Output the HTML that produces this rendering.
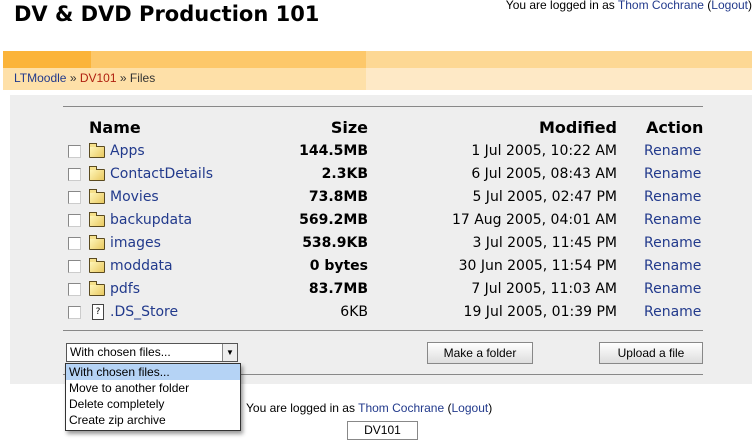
<!DOCTYPE html>
<html><head><style>
body{margin:0;width:755px;height:442px;background:#fff;font-family:"DejaVu Sans","Liberation Sans",sans-serif;position:relative;overflow:hidden;color:#000}
.a{position:absolute;white-space:nowrap}
a,.l{color:#223a8c;text-decoration:none}
.row{position:absolute;left:0;height:20px;font-size:14px}
.cb{position:absolute;left:68px;top:2px;width:11px;height:11px;border:1px solid #888;border-right-color:#ccc;border-bottom-color:#ccc;background:#fff}
.fd{position:absolute;left:89px;top:3px;width:14px;height:10px;background:linear-gradient(135deg,#fff6b8,#e8c860);border:1px solid #5a4a20;border-radius:1px}
.fd:before{content:"";position:absolute;left:-1px;top:-4px;width:6px;height:3px;border:1px solid #5a4a20;border-bottom:none;background:#f5e08a}
.nm{position:absolute;left:110px;top:0;color:#223a8c}
.sz{position:absolute;right:387px;top:0;font-weight:bold}
.md{position:absolute;right:138px;top:0}
.rn{position:absolute;left:644px;top:0;color:#223a8c}
.btn{position:absolute;background:linear-gradient(#fff,#ddd);border:1px solid #888;font-size:12px;text-align:center;font-family:"Liberation Sans",sans-serif}
</style></head><body>
<div class="a" style="left:14px;top:2px;font-size:21px;font-weight:bold">DV &amp; DVD Production 101</div>
<div class="a" style="right:3px;top:-2px;font-size:12px;font-family:'Liberation Sans',sans-serif">You are logged in as <span class="l">Thom Cochrane</span> (<span class="l">Logout</span>)</div>
<div class="a" style="left:3px;top:51px;width:749px;height:17px;background:#fdc86a"></div>
<div class="a" style="left:3px;top:51px;width:88px;height:17px;background:#fbb43a"></div>
<div class="a" style="left:366px;top:51px;width:386px;height:17px;background:#fdd894"></div>
<div class="a" style="left:3px;top:68px;width:749px;height:22px;background:#fee0a8"></div>
<div class="a" style="left:366px;top:68px;width:386px;height:22px;background:#fee9c6"></div>
<div class="a" style="left:14px;top:70px;font-size:12px;line-height:16px;font-family:'Liberation Sans',sans-serif;color:#333"><span class="l">LTMoodle</span> » <span style="color:#b02010">DV101</span> » Files</div>
<div class="a" style="left:10px;top:95px;width:742px;height:289px;background:#eee"></div>
<div class="a" style="left:63px;top:106px;width:640px;height:1px;background:#888"></div>
<div class="a" style="left:63px;top:330px;width:640px;height:1px;background:#888"></div>
<div class="a" style="left:63px;top:374px;width:640px;height:1px;background:#888"></div>
<div class="row" style="top:118px;width:755px;font-weight:bold;font-size:16px"><span class="a" style="left:89px">Name</span><span class="a" style="right:387px">Size</span><span class="a" style="right:138px">Modified</span><span class="a" style="left:646px">Action</span></div>

<div class="row" style="top:143px;width:755px"><div class="cb"></div><div class="fd"></div><span class="nm">Apps</span><span class="sz">144.5MB</span><span class="md">1 Jul 2005, 10:22 AM</span><span class="rn">Rename</span></div>
<div class="row" style="top:166px;width:755px"><div class="cb"></div><div class="fd"></div><span class="nm">ContactDetails</span><span class="sz">2.3KB</span><span class="md">6 Jul 2005, 08:43 AM</span><span class="rn">Rename</span></div>
<div class="row" style="top:189px;width:755px"><div class="cb"></div><div class="fd"></div><span class="nm">Movies</span><span class="sz">73.8MB</span><span class="md">5 Jul 2005, 02:47 PM</span><span class="rn">Rename</span></div>
<div class="row" style="top:212px;width:755px"><div class="cb"></div><div class="fd"></div><span class="nm">backupdata</span><span class="sz">569.2MB</span><span class="md">17 Aug 2005, 04:01 AM</span><span class="rn">Rename</span></div>
<div class="row" style="top:235px;width:755px"><div class="cb"></div><div class="fd"></div><span class="nm">images</span><span class="sz">538.9KB</span><span class="md">3 Jul 2005, 11:45 PM</span><span class="rn">Rename</span></div>
<div class="row" style="top:258px;width:755px"><div class="cb"></div><div class="fd"></div><span class="nm">moddata</span><span class="sz">0 bytes</span><span class="md">30 Jun 2005, 11:54 PM</span><span class="rn">Rename</span></div>
<div class="row" style="top:281px;width:755px"><div class="cb"></div><div class="fd"></div><span class="nm">pdfs</span><span class="sz">83.7MB</span><span class="md">7 Jul 2005, 11:03 AM</span><span class="rn">Rename</span></div>
<div class="row" style="top:304px;width:755px"><div class="cb"></div><div class="a" style="left:92px;top:0px;width:10px;height:14px;border:1px solid #444;background:#fff;font-size:9px;line-height:14px;text-align:center">?</div><span class="nm">.DS_Store</span><span class="sz" style="font-weight:normal">6KB</span><span class="md">19 Jul 2005, 01:39 PM</span><span class="rn">Rename</span></div>

<div class="a" style="left:66px;top:343px;width:170px;height:17px;border:1px solid #555;background:#fff;font-size:12px;line-height:17px;font-family:'Liberation Sans',sans-serif"><span style="padding-left:3px">With chosen files...</span><span class="a" style="right:0;top:0;width:14px;height:17px;border-left:1px solid #888;background:#eee;font-size:8px;text-align:center">▼</span></div>
<div class="btn" style="left:427px;top:342px;width:104px;height:20px;line-height:20px">Make a folder</div>
<div class="btn" style="left:599px;top:342px;width:102px;height:20px;line-height:20px">Upload a file</div>

<div class="a" style="left:246px;top:401px;font-size:12px;font-family:'Liberation Sans',sans-serif">You are logged in as <span class="l">Thom Cochrane</span> (<span class="l">Logout</span>)</div>
<div class="btn" style="left:347px;top:421px;width:69px;height:17px;line-height:17px;background:#fff">DV101</div>

<div class="a" style="left:65px;top:363px;width:174px;height:66px;border:1px solid #333;background:#fff;box-shadow:2px 3px 4px rgba(0,0,0,.4);font-size:12px;line-height:16px;font-family:'Liberation Sans',sans-serif">
<div style="background:#b5d3f5;padding-left:3px">With chosen files...</div>
<div style="padding-left:3px">Move to another folder</div>
<div style="padding-left:3px">Delete completely</div>
<div style="padding-left:3px">Create zip archive</div>
</div>
</body></html>
